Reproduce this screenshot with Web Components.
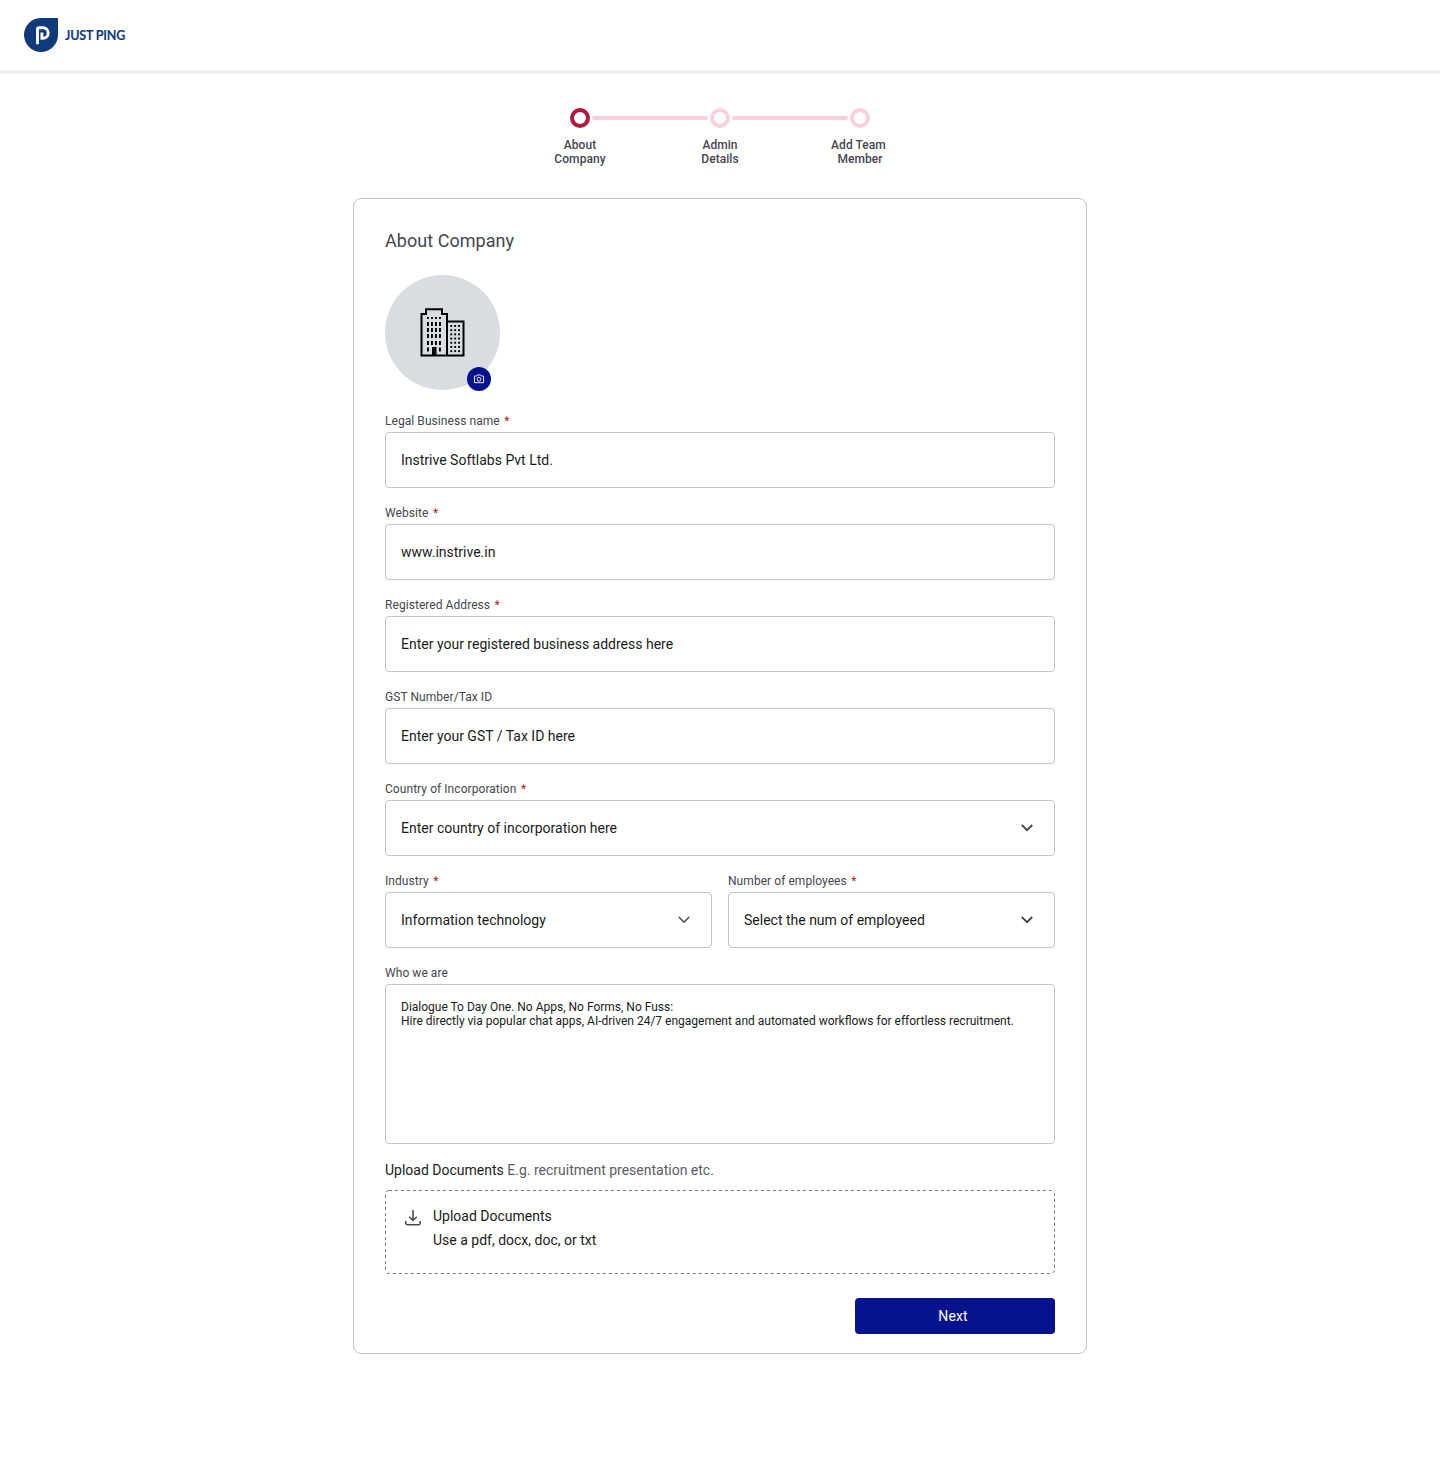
<!DOCTYPE html>
<html lang="en">
<head>
<meta charset="utf-8">
<title>Just Ping – About Company</title>
<style>
body{margin:0;background:#fff;font-family:Roboto,"Liberation Sans",sans-serif;color:#1a1b21}
</style>
</head>
<body>
<onboarding-page></onboarding-page>
<script>
const define = (name, html, setup) => customElements.define(name, class extends HTMLElement {
  connectedCallback() {
    if (this.shadowRoot) return;
    const root = this.attachShadow({ mode: 'open' });
    root.innerHTML = html;
    if (setup) setup(this, root);
  }
});

define('app-header', `
<style>
:host{display:flex;align-items:center;height:70px;padding:0 24px;border-bottom:4px solid #f2f2f2;gap:7px}
svg{display:block}
span{font:700 12.5px/16px Lato,sans-serif;color:#0f3a7b;-webkit-text-stroke:.1px #0f3a7b;white-space:nowrap;letter-spacing:-.2px;padding-top:2px}
</style>
<svg width="34" height="34" viewBox="0 0 34 34"><path d="M17 0H34V17A17 17 0 1 1 17 0Z" fill="#0f3a7b"/><path d="M13.5 26.2V11.3Q13.5 9.8 15 9.8H19A5.2 5.2 0 0 1 19 20.2H17.9V14.5" fill="none" stroke="#fff" stroke-width="2.9"/></svg>
<span>JUST PING</span>`);

define('step-item', `
<style>
:host{display:flex;flex-direction:column;align-items:center;width:20px;gap:10px}
i{box-sizing:border-box;width:20px;height:20px;border:4px solid #f9d0d9;border-radius:50%}
:host([active]) i{border-color:#b3173b}
div{font-size:12px;font-weight:500;line-height:14px;letter-spacing:.06px;color:#45464f;text-align:center;white-space:pre}
</style><i></i><div><slot></slot></div>`);

define('step-bar', `
<style>
:host{display:flex;justify-content:center;gap:2px}
b{width:116px;height:4px;margin-top:8px;border-radius:2px;background:#f9d0d9}
</style>
<step-item active>About\nCompany</step-item><b></b><step-item>Admin\nDetails</step-item><b></b><step-item>Add Team&nbsp;\nMember</step-item>`);

define('company-avatar', `
<style>
:host{display:flex;align-items:center;justify-content:center;position:relative;width:115px;height:115px;border-radius:50%;background:#d9dce1}
.badge{position:absolute;left:82px;top:91.5px;width:24px;height:24px;border-radius:50%;background:#07128f;display:flex;align-items:center;justify-content:center}
svg{display:block}
</style>
<svg width="45" height="49" viewBox="0 0 45 49">
<path d="M1.5 47.5V6H6V1.2H22V6H27V47.5M27 13.5H43.5V47.5M.5 47.5H44.5" fill="none" stroke="#000" stroke-width="2"/>
<g id="w"></g><path d="M12 39h4.5v8H12z"/></svg>
<span class="badge"><svg width="12" height="12" viewBox="0 0 12 12" fill="none" stroke="#fff" stroke-width=".9"><path d="M1.5 3H3.6L4.5 1.9H7.5L8.4 3H10.5V9.7H1.5Z" stroke-linejoin="round"/><circle cx="6" cy="6.2" r="1.9"/></svg></span>`,
(host, root) => {
  let s = '';
  for (const y of [9, 14, 20, 26, 33, 39.5]) for (const x of [7, 11, 15, 19]) {
    if (y === 39.5 && (x === 11 || x === 15)) continue;
    s += `<rect x="${x}" y="${y}" width="1.9" height="${y === 9 ? 1.9 : 4}"/>`;
  }
  for (let y = 17; y < 45; y += 4.2) for (const x of [30.3, 34.2, 38.1]) s += `<rect x="${x}" y="${y}" width="1.9" height="1.9"/>`;
  root.getElementById('w').innerHTML = s;
});

define('chevron-icon', `
<style>:host{display:block;width:24px;height:24px}path{stroke-width:1.9}:host([thin]) path{stroke-width:1.5}</style>
<svg width="24" height="24" viewBox="0 0 24 24" fill="none" stroke="#45464f"><path d="M6.8 9L12 14.2L17.2 9"/></svg>`);

define('form-field', `
<style>
:host{display:block;flex:1;min-width:0}
label{display:block;font-size:12px;line-height:16px;letter-spacing:.06px;color:#45464f;margin-bottom:3px}
em{font-style:normal;color:#ba1a1a;margin-left:4.5px}
.box{box-sizing:border-box;display:flex;align-items:center;justify-content:space-between;height:56px;border:1px solid #c5c4d0;border-radius:4px;padding:0 15px;font-size:14px;line-height:20px;color:#1a1b21}
:host([multiline]) .box{height:160px;align-items:flex-start;padding-top:15px;font-size:12px;line-height:14px;white-space:pre}
</style><label></label><div class="box"><span><slot></slot></span></div>`,
(host, root) => {
  const label = root.querySelector('label');
  label.textContent = host.getAttribute('label');
  if (host.hasAttribute('required')) label.insertAdjacentHTML('beforeend', '<em>*</em>');
  if (host.hasAttribute('select'))
    root.querySelector('.box').insertAdjacentHTML('beforeend', `<chevron-icon ${host.getAttribute('select')}></chevron-icon>`);
});

define('upload-area', `
<style>
:host{display:grid;height:84px;font-size:14px;line-height:24px}
.frame,.row{grid-area:1/1}
.row{display:flex;padding:14px 20px;gap:12px}
.row svg{margin-top:6px}
</style>
<svg class="frame" width="670" height="84"><rect x=".5" y=".5" width="669" height="83" rx="3.5" fill="none" stroke="#767680" stroke-dasharray="3 3"/></svg>
<div class="row"><svg width="16" height="16" viewBox="0 0 16 16" fill="none" stroke="#45464f" stroke-width="1.5"><path d="M8 0V10.2M4.2 6.7L8 10.5L11.8 6.7M.8 11V13.3Q.8 14.7 2.2 14.7H13.8Q15.2 14.7 15.2 13.3V11"/></svg>
<div>Upload Documents<br>Use a pdf, docx, doc, or txt</div></div>`);

define('primary-button', `
<style>
:host{display:block;width:200px}
button{display:block;width:100%;height:36px;padding:0 4px 0 0;border:0;border-radius:4px;background:#07128f;color:#fff;font:400 14px/20px Roboto,sans-serif;letter-spacing:.1px}
</style><button><slot></slot></button>`);

define('onboarding-page', `
<style>
:host{display:block;min-height:1484px}
step-bar{margin-top:34px}
main{box-sizing:border-box;width:734px;height:1156px;margin:32px auto 0;border:1px solid #c5c4d0;border-radius:8px;padding:30px 31px 0}
h1{margin:0 0 22px;font-size:18px;font-weight:400;line-height:24px;letter-spacing:.04px;color:#45464f}
form{display:flex;flex-direction:column;gap:17px;margin-top:23px}
.row{display:flex;gap:16px}
p{margin:16px 0 10px;font-size:14px;line-height:20px}
p span{color:#5b5c66}
primary-button{margin:24px 0 0 auto}
</style>
<app-header></app-header>
<step-bar></step-bar>
<main>
<h1>About Company</h1>
<company-avatar></company-avatar>
<form>
<form-field label="Legal Business name" required>Instrive Softlabs Pvt Ltd.</form-field>
<form-field label="Website" required>www.instrive.in</form-field>
<form-field label="Registered Address" required>Enter your registered business address here</form-field>
<form-field label="GST Number/Tax ID">Enter your GST / Tax ID here</form-field>
<form-field label="Country of Incorporation" required select="">Enter country of incorporation here</form-field>
<div class="row"><form-field label="Industry" required select="thin">Information technology</form-field><form-field label="Number of employees" required select="">Select the num of employeed</form-field></div>
<form-field label="Who we are" multiline>Dialogue To Day One. No Apps, No Forms, No Fuss:\nHire directly via popular chat apps, AI-driven 24/7 engagement and automated workflows for effortless recruitment.</form-field>
</form>
<p>Upload Documents <span>E.g. recruitment presentation etc.</span></p>
<upload-area></upload-area>
<primary-button>Next</primary-button>
</main>`);
</script>
</body>
</html>
